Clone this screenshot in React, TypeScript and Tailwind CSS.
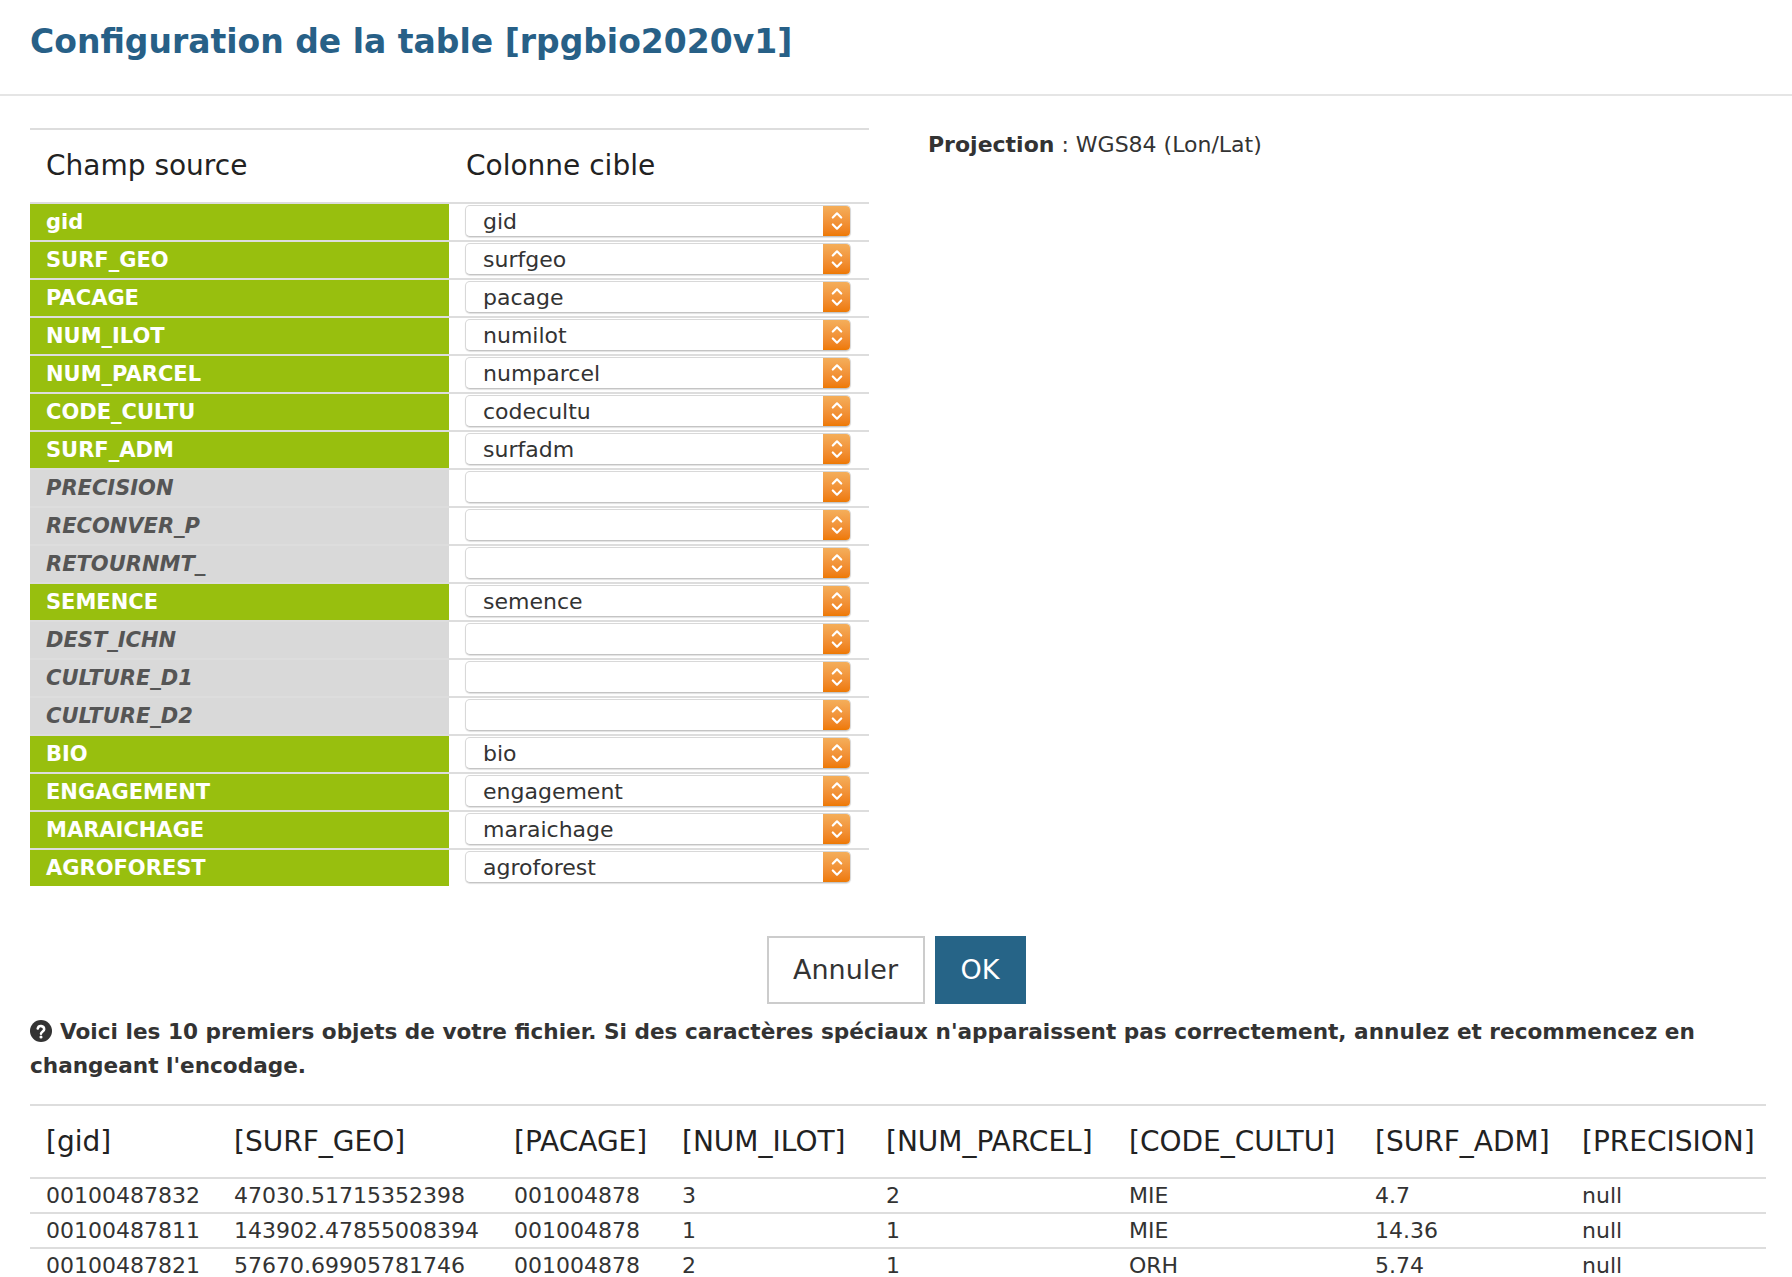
import React from "react";

const fields: [string, string][] = [
  ["gid", "gid"],
  ["SURF_GEO", "surfgeo"],
  ["PACAGE", "pacage"],
  ["NUM_ILOT", "numilot"],
  ["NUM_PARCEL", "numparcel"],
  ["CODE_CULTU", "codecultu"],
  ["SURF_ADM", "surfadm"],
  ["PRECISION", ""],
  ["RECONVER_P", ""],
  ["RETOURNMT_", ""],
  ["SEMENCE", "semence"],
  ["DEST_ICHN", ""],
  ["CULTURE_D1", ""],
  ["CULTURE_D2", ""],
  ["BIO", "bio"],
  ["ENGAGEMENT", "engagement"],
  ["MARAICHAGE", "maraichage"],
  ["AGROFOREST", "agroforest"],
];

const previewCols = [
  "[gid]",
  "[SURF_GEO]",
  "[PACAGE]",
  "[NUM_ILOT]",
  "[NUM_PARCEL]",
  "[CODE_CULTU]",
  "[SURF_ADM]",
  "[PRECISION]",
];

const previewRows = [
  ["00100487832", "47030.51715352398", "001004878", "3", "2", "MIE", "4.7", "null"],
  ["00100487811", "143902.47855008394", "001004878", "1", "1", "MIE", "14.36", "null"],
  ["00100487821", "57670.69905781746", "001004878", "2", "1", "ORH", "5.74", "null"],
];

const grid =
  "grid grid-cols-[188px_280px_168px_204px_243px_246px_207px_200px]";

function FakeSelect({ value }: { value: string }) {
  return (
    <div className="mt-[1px] flex h-[32px] w-[386px] overflow-hidden rounded-[5px] border border-[#d8d8d8] border-b-[#c4c4c4] bg-white shadow-[0_1px_1px_rgba(0,0,0,0.12)]">
      <div className="flex-1 pl-[17px] pt-[3px] text-[22px] leading-[26px] text-[#333]">
        {value}
      </div>
      <div className="flex w-[27px] items-center justify-center bg-gradient-to-b from-[#f4ae5a] to-[#ee7900]">
        <svg width="12" height="26" viewBox="0 0 12 26" fill="none">
          <path
            d="M1.8 9.5 6 5.3l4.2 4.2M1.8 16.5 6 20.7l4.2-4.2"
            stroke="#fff"
            strokeWidth="2.2"
            strokeLinecap="round"
            strokeLinejoin="round"
          />
        </svg>
      </div>
    </div>
  );
}

function HelpIcon() {
  return (
    <svg
      width="22"
      height="22"
      viewBox="0 0 20 20"
      className="mr-[8px] inline-block align-[-3px]"
    >
      <circle cx="10" cy="10" r="10" fill="#333" />
      <path
        d="M7 7.8a3 3 0 0 1 5.9.6c0 1.9-2.9 2.1-2.9 4.1"
        stroke="#fff"
        strokeWidth="2.3"
        fill="none"
        strokeLinecap="round"
      />
      <circle cx="10" cy="15.4" r="1.4" fill="#fff" />
    </svg>
  );
}

export default function App() {
  return (
    <div className="min-h-screen bg-white font-['DejaVu_Sans',sans-serif] text-[#333]">
      <div className="border-b-2 border-[#e5e5e5] px-[30px] pb-[29px] pt-[19px]">
        <h1 className="text-[33px] font-bold leading-[46px] text-[#276087]">
          Configuration de la table [rpgbio2020v1]
        </h1>
      </div>

      <div className="px-[30px] pt-[32px]">
        <div className="flex">
          <div className="w-[839px] border-t-2 border-[#dddddd]">
            <div className="flex h-[72px] items-center text-[28px] leading-[36px] text-[#222]">
              <div className="w-[435px] pl-[16px]">Champ source</div>
              <div className="pl-[1px]">Colonne cible</div>
            </div>
            {fields.map(([src, target]) => {
              const mapped = target !== "";
              return (
                <div key={src} className="flex h-[38px] border-t-2 border-[#dddddd]">
                  <div
                    className={
                      mapped
                        ? "w-[419px] bg-[#98bf0e] pl-[16px] text-[21px] font-bold leading-[36px] text-white"
                        : "w-[419px] bg-[#d9d9d9] pl-[16px] text-[21px] font-bold italic leading-[36px] text-[#555]"
                    }
                  >
                    {src}
                  </div>
                  <div className="pl-[16px]">
                    <FakeSelect value={target} />
                  </div>
                </div>
              );
            })}
          </div>
          <div className="ml-[59px] pt-[2px] text-[22px] leading-[30px]">
            <span className="font-bold">Projection</span> : WGS84 (Lon/Lat)
          </div>
        </div>

        <div className="mt-[50px] flex justify-center gap-[10px]">
          <button className="h-[68px] w-[158px] border-2 border-[#cccccc] bg-white text-[27px] text-[#333]">
            Annuler
          </button>
          <button className="h-[68px] w-[91px] bg-[#266487] text-[27px] text-white">
            OK
          </button>
        </div>

        <p className="mt-[11px] w-[1736px] text-[21.6px] font-bold leading-[34px]">
          <HelpIcon />
          Voici les 10 premiers objets de votre fichier. Si des caractères spéciaux n'apparaissent pas correctement, annulez et recommencez en changeant l'encodage.
        </p>

        <div className="mt-[21px] w-[1736px] border-t-2 border-[#dddddd]">
          <div className={`${grid} h-[71px] items-center text-[28px] leading-[34px] text-[#222]`}>
            {previewCols.map((c) => (
              <div key={c} className="whitespace-nowrap pl-[16px]">
                {c}
              </div>
            ))}
          </div>
          {previewRows.map((row, i) => (
            <div
              key={i}
              className={`${grid} h-[35px] items-center border-t-2 border-[#dddddd] text-[22px] leading-[33px]`}
            >
              {row.map((cell, j) => (
                <div key={j} className="whitespace-nowrap pl-[16px]">
                  {cell}
                </div>
              ))}
            </div>
          ))}
        </div>
      </div>
    </div>
  );
}
